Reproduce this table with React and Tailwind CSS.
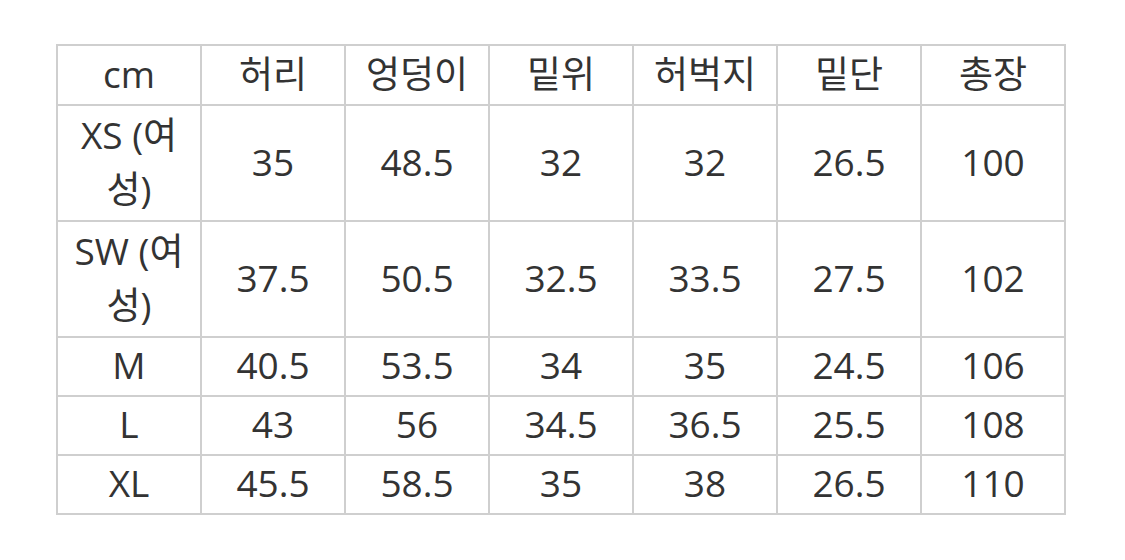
import React from "react";

const headers = ["cm", "허리", "엉덩이", "밑위", "허벅지", "밑단", "총장"];

const rows = [
    { size: "XS (여성)", values: ["35", "48.5", "32", "32", "26.5", "100"], tall: true },
    { size: "SW (여성)", values: ["37.5", "50.5", "32.5", "33.5", "27.5", "102"], tall: true },
    { size: "M", values: ["40.5", "53.5", "34", "35", "24.5", "106"] },
    { size: "L", values: ["43", "56", "34.5", "36.5", "25.5", "108"] },
    { size: "XL", values: ["45.5", "58.5", "35", "38", "26.5", "110"] },
];

const cell = "border-2 border-[#cfcfcf] w-[144px] px-2 pt-0 pb-[3px] text-center align-middle font-normal";

export default function App() {
    return (
        <div
            className="w-[1125px] h-[560px] bg-white pt-[44px] pl-[56px] text-[#333333] text-[37px] leading-[54px]"
            style={{ fontFamily: '"Open Sans", "Noto Sans CJK KR", sans-serif' }}
        >
            <table className="border-collapse table-fixed w-[1009px]">
                <thead>
                    <tr className="h-[60px]">
                        {headers.map((h) => (
                            <th key={h} className={cell}>{h}</th>
                        ))}
                    </tr>
                </thead>
                <tbody>
                    {rows.map((r) => (
                        <tr key={r.size} className={r.tall ? "h-[116px]" : "h-[59px]"}>
                            <td className={cell}>{r.size}</td>
                            {r.values.map((v, i) => (
                                <td key={i} className={cell}>{v}</td>
                            ))}
                        </tr>
                    ))}
                </tbody>
            </table>
        </div>
    );
}
